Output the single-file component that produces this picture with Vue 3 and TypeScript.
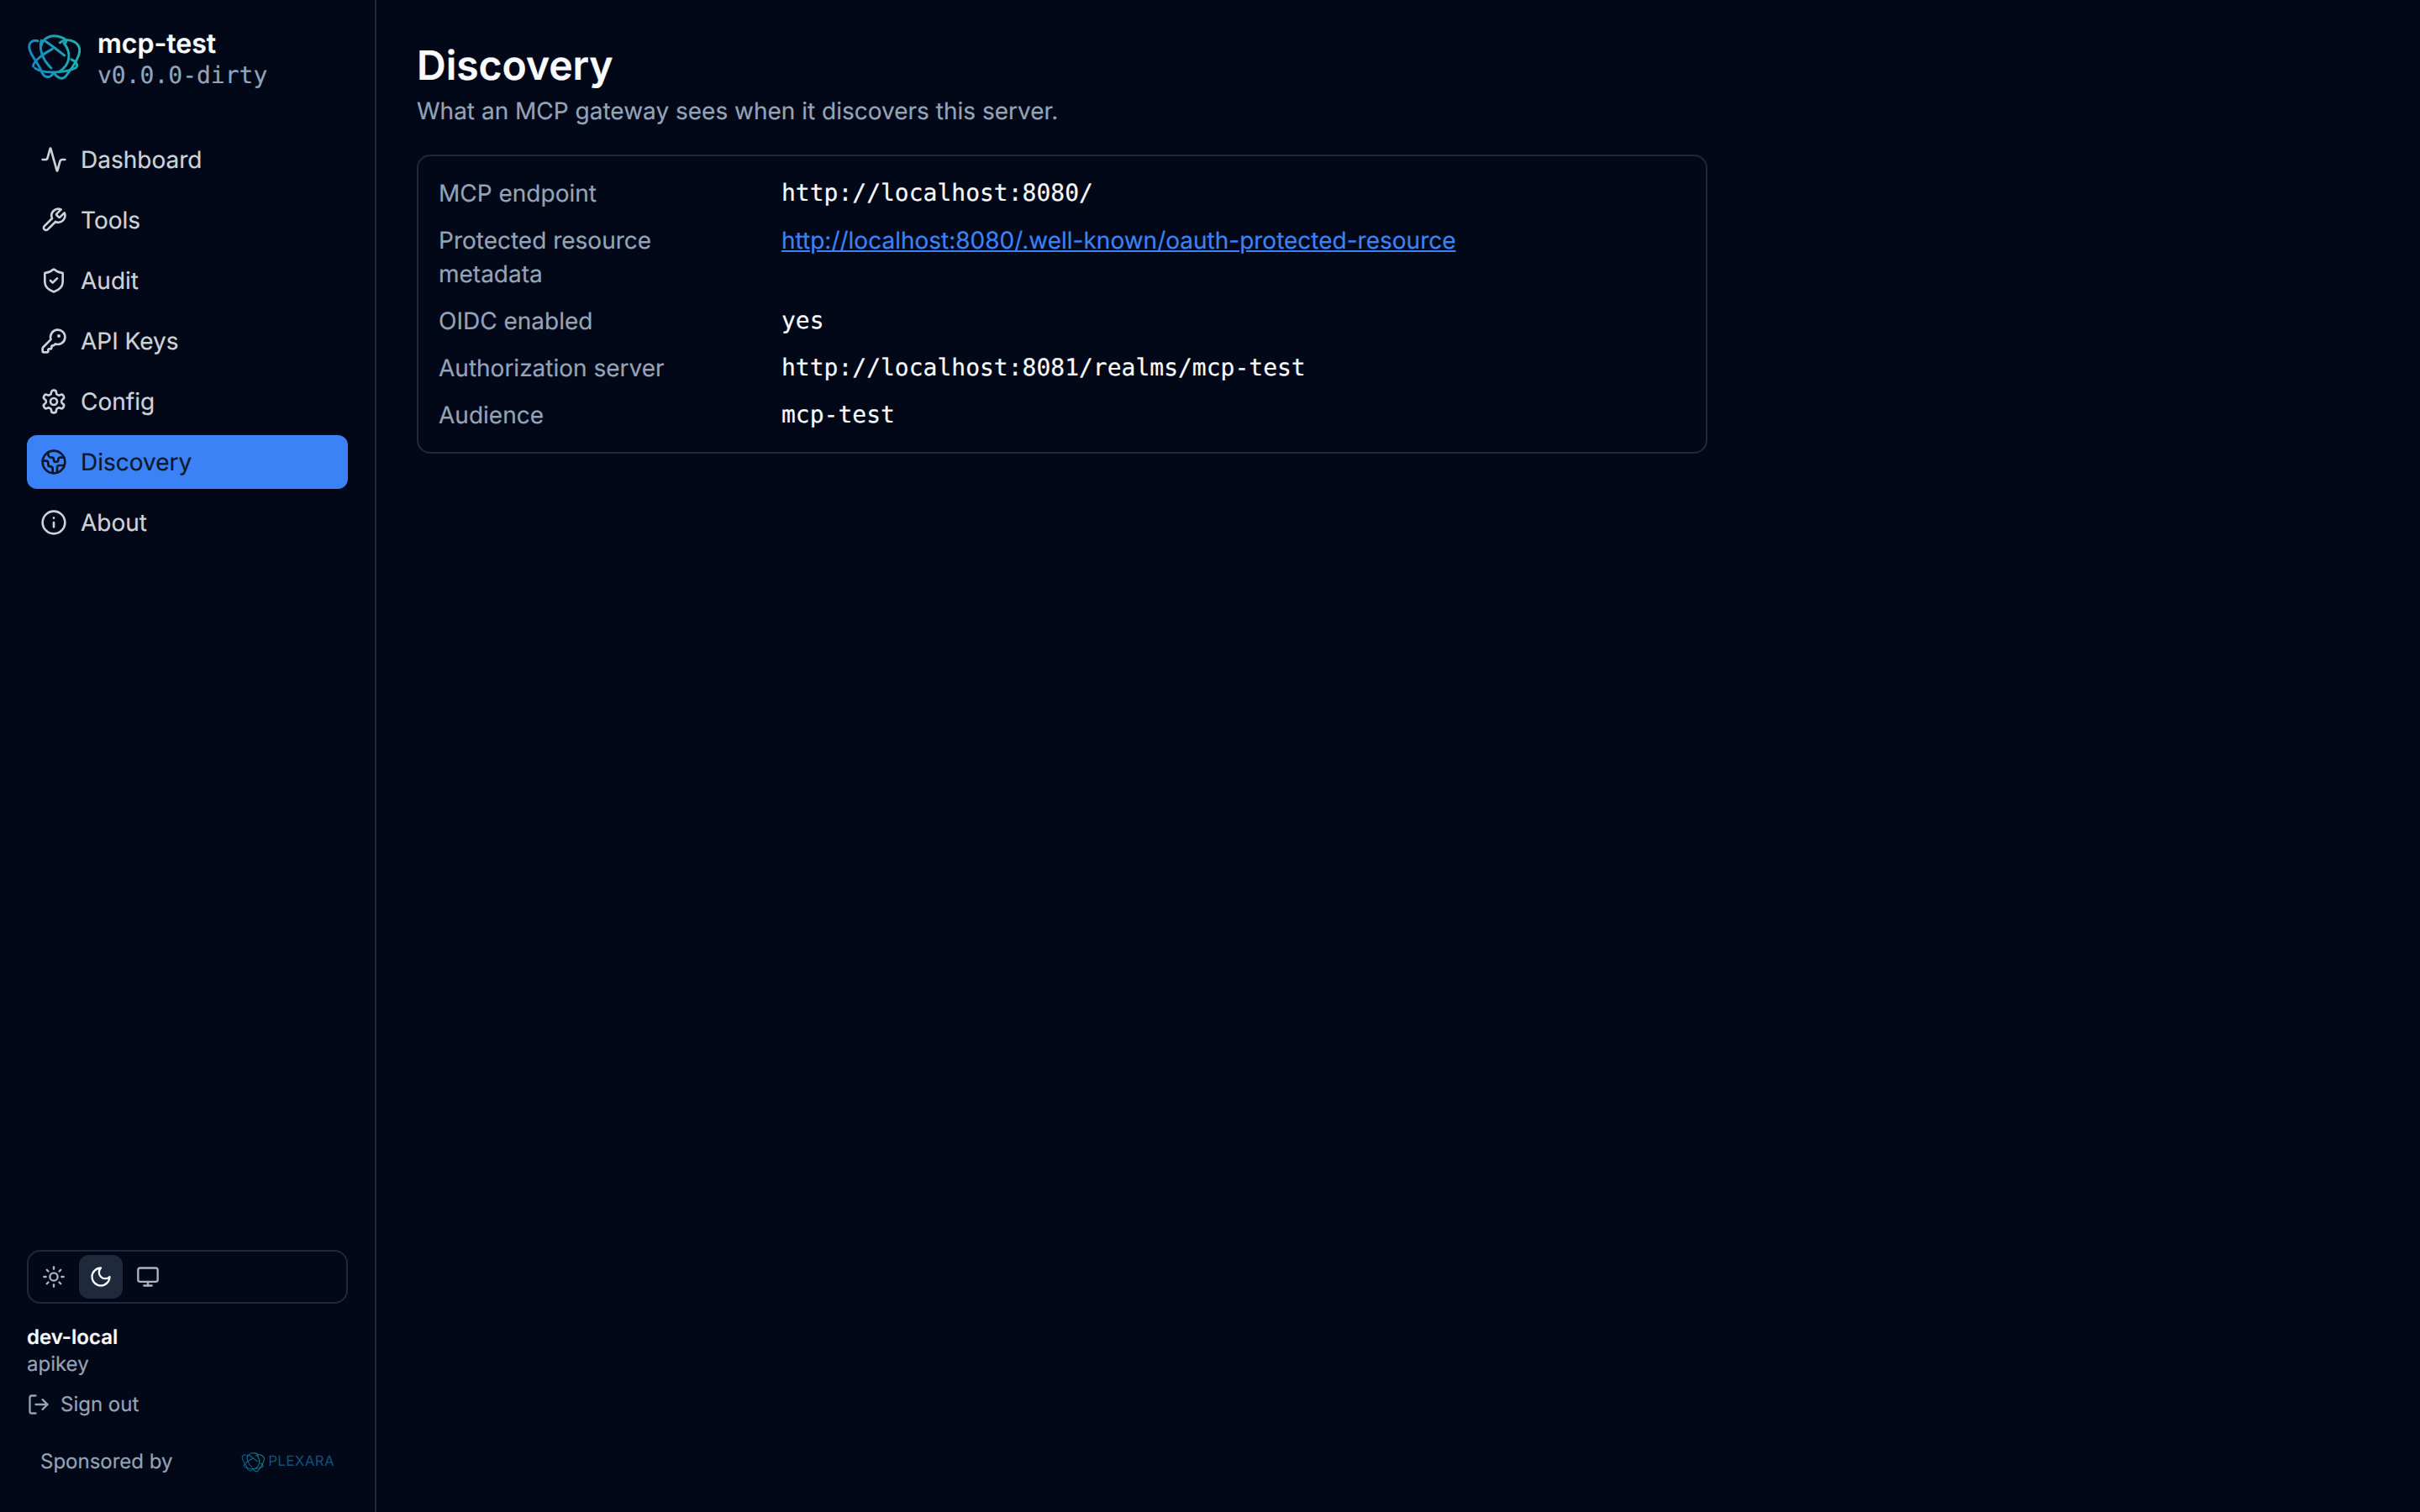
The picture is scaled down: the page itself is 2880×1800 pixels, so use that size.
<script setup lang="ts">
const c = (cx: number, cy: number, r: number) =>
  `M${cx - r} ${cy}a${r} ${r} 0 1 0 ${2 * r} 0a${r} ${r} 0 1 0 ${-2 * r} 0`

const icons: Record<string, string[]> = {
  activity: ['M22 12h-2.48a2 2 0 0 0-1.93 1.46l-2.35 8.36a.25.25 0 0 1-.48 0L9.24 2.18a.25.25 0 0 0-.48 0l-2.35 8.36A2 2 0 0 1 4.49 12H2'],
  wrench: ['M14.7 6.3a1 1 0 0 0 0 1.4l1.6 1.6a1 1 0 0 0 1.4 0l3.77-3.77a6 6 0 0 1-7.94 7.94l-6.91 6.91a2.12 2.12 0 0 1-3-3l6.91-6.91a6 6 0 0 1 7.94-7.94l-3.76 3.76z'],
  shield: ['M20 13c0 5-3.5 7.5-7.66 8.95a1 1 0 0 1-.67-.01C7.5 20.5 4 18 4 13V6a1 1 0 0 1 1-1c2 0 4.5-1.2 6.24-2.72a1.17 1.17 0 0 1 1.52 0C14.51 3.81 17 5 19 5a1 1 0 0 1 1 1z', 'm9 12 2 2 4-4'],
  key: ['M2.586 17.414A2 2 0 0 0 2 18.828V21a1 1 0 0 0 1 1h3a1 1 0 0 0 1-1v-1a1 1 0 0 1 1-1h1a1 1 0 0 0 1-1v-1a1 1 0 0 1 1-1h.172a2 2 0 0 0 1.414-.586l.814-.814a6.5 6.5 0 1 0-4-4z', c(16.5, 7.5, 0.5)],
  gear: ['M12.22 2h-.44a2 2 0 0 0-2 2v.18a2 2 0 0 1-1 1.73l-.43.25a2 2 0 0 1-2 0l-.15-.08a2 2 0 0 0-2.73.73l-.22.38a2 2 0 0 0 .73 2.73l.15.1a2 2 0 0 1 1 1.72v.51a2 2 0 0 1-1 1.74l-.15.09a2 2 0 0 0-.73 2.73l.22.38a2 2 0 0 0 2.73.73l.15-.08a2 2 0 0 1 2 0l.43.25a2 2 0 0 1 1 1.73V20a2 2 0 0 0 2 2h.44a2 2 0 0 0 2-2v-.18a2 2 0 0 1 1-1.73l.43-.25a2 2 0 0 1 2 0l.15.08a2 2 0 0 0 2.73-.73l.22-.39a2 2 0 0 0-.73-2.73l-.15-.08a2 2 0 0 1-1-1.74v-.5a2 2 0 0 1 1-1.74l.15-.09a2 2 0 0 0 .73-2.73l-.22-.38a2 2 0 0 0-2.73-.73l-.15.08a2 2 0 0 1-2 0l-.43-.25a2 2 0 0 1-1-1.73V4a2 2 0 0 0-2-2z', c(12, 12, 3)],
  earth: ['M21.54 15H17a2 2 0 0 0-2 2v4.54', 'M7 3.34V5a3 3 0 0 0 3 3a2 2 0 0 1 2 2c0 1.1.9 2 2 2a2 2 0 0 0 2-2c0-1.1.9-2 2-2h3.17', 'M11 21.95V18a2 2 0 0 0-2-2a2 2 0 0 1-2-2v-1a2 2 0 0 0-2-2H2.05', c(12, 12, 10)],
  info: [c(12, 12, 10), 'M12 16v-4', 'M12 8h.01'],
  sun: [c(12, 12, 4), 'M12 2v2', 'M12 20v2', 'm4.93 4.93 1.41 1.41', 'm17.66 17.66 1.41 1.41', 'M2 12h2', 'M20 12h2', 'm6.34 17.66-1.41 1.41', 'm19.07 4.93-1.41 1.41'],
  moon: ['M12 3a6 6 0 0 0 9 9 9 9 0 1 1-9-9Z'],
  monitor: ['M4 3h16a2 2 0 0 1 2 2v10a2 2 0 0 1-2 2H4a2 2 0 0 1-2-2V5a2 2 0 0 1 2-2z', 'M8 21h8', 'M12 17v4'],
  logout: ['m16 17 5-5-5-5', 'M21 12H9', 'M9 21H5a2 2 0 0 1-2-2V5a2 2 0 0 1 2-2h4'],
}

const nav = [
  { label: 'Dashboard', icon: 'activity' },
  { label: 'Tools', icon: 'wrench' },
  { label: 'Audit', icon: 'shield' },
  { label: 'API Keys', icon: 'key' },
  { label: 'Config', icon: 'gear' },
  { label: 'Discovery', icon: 'earth', active: true },
  { label: 'About', icon: 'info' },
]

const themes = [
  { icon: 'sun' },
  { icon: 'moon', active: true },
  { icon: 'monitor' },
]

const logoPaths = [
  'M76 86C56 80 42 94 47 114C52 138 76 160 88 190C96 214 118 218 130 196',
  'M88 102C92 78 118 64 145 70C165 74 178 82 172 92',
  'M152 92C175 74 212 84 220 112C224 140 196 176 174 206C160 224 140 212 132 196',
  'M88 84C80 112 90 150 122 180',
  'M60 174C58 160 88 134 126 114',
  'M66 180C96 202 176 196 208 178C218 168 204 154 192 150',
  'M100 86C126 102 148 122 168 136',
  'M166 94C192 124 190 168 150 192',
]
</script>

<template>
  <div class="shell">
    <aside class="sidebar">
      <div class="brand">
        <svg class="logo" viewBox="38 58 186 165" fill="none">
          <defs>
            <linearGradient id="knot" gradientUnits="userSpaceOnUse" x1="40" y1="150" x2="225" y2="110">
              <stop offset="0" stop-color="#1585c4" />
              <stop offset="1" stop-color="#1fb5ad" />
            </linearGradient>
          </defs>
          <path v-for="d in logoPaths" :key="d" :d="d" stroke="url(#knot)" stroke-width="8.5" stroke-linecap="round" />
        </svg>
        <div class="brand-text">
          <div class="brand-name">mcp-test</div>
          <div class="brand-version">v0.0.0-dirty</div>
        </div>
      </div>

      <nav class="nav">
        <a v-for="item in nav" :key="item.label" class="nav-item" :class="{ active: item.active }">
          <svg class="icon" viewBox="0 0 24 24">
            <path v-for="d in icons[item.icon]" :key="d" :d="d" />
          </svg>
          <span>{{ item.label }}</span>
        </a>
      </nav>

      <div class="foot">
        <div class="theme">
          <button v-for="t in themes" :key="t.icon" class="theme-btn" :class="{ active: t.active }">
            <svg class="icon-sm" viewBox="0 0 24 24">
              <path v-for="d in icons[t.icon]" :key="d" :d="d" />
            </svg>
          </button>
        </div>
        <div class="user">
          <div class="user-name">dev-local</div>
          <div class="user-kind">apikey</div>
        </div>
        <a class="signout">
          <svg class="icon-sm" viewBox="0 0 24 24">
            <path v-for="d in icons.logout" :key="d" :d="d" />
          </svg>
          <span>Sign out</span>
        </a>
        <div class="sponsor">
          <span>Sponsored by</span>
          <span class="plexara">
            <svg class="plexara-logo" viewBox="38 58 186 165" fill="none">
              <path v-for="d in logoPaths" :key="d" :d="d" stroke="url(#knot)" stroke-width="7" stroke-linecap="round" />
            </svg>
            <span>PLEXARA</span>
          </span>
        </div>
      </div>
    </aside>

    <main class="main">
      <h1 class="title">Discovery</h1>
      <p class="subtitle">What an MCP gateway sees when it discovers this server.</p>
      <dl class="card">
        <dt>MCP endpoint</dt>
        <dd class="mono">http://localhost:8080/</dd>
        <dt>Protected resource metadata</dt>
        <dd><a class="link">http://localhost:8080/.well-known/oauth-protected-resource</a></dd>
        <dt>OIDC enabled</dt>
        <dd class="mono">yes</dd>
        <dt>Authorization server</dt>
        <dd class="mono">http://localhost:8081/realms/mcp-test</dd>
        <dt>Audience</dt>
        <dd class="mono">mcp-test</dd>
      </dl>
    </main>
  </div>
</template>

<style scoped>
.shell {
  display: flex;
  height: 1800px;
  font-family: Inter, "Noto Sans", sans-serif;
  font-size: 28px;
  line-height: 40px;
  color: #f8fafc;
  background: #020817;
  text-rendering: geometricPrecision;
  -webkit-text-stroke: 0.2px currentColor;
}
.sidebar {
  width: 448px;
  box-sizing: border-box;
  border-right: 2px solid #1e293b;
  padding: 32px 32px 40px;
  display: flex;
  flex-direction: column;
}
.brand {
  display: flex;
  align-items: flex-start;
  gap: 20px;
  height: 70px;
}
.logo {
  width: 64px;
  height: 57px;
  margin-top: 7px;
  flex: none;
}
.brand-name {
  font-size: 32px;
  font-weight: 600;
  line-height: 40px;
}
.brand-version {
  font-family: "DejaVu Sans Mono", monospace;
  font-size: 28px;
  line-height: 36px;
  color: #94a3b8;
}
.nav {
  margin-top: 56px;
  display: flex;
  flex-direction: column;
  gap: 8px;
}
.nav-item {
  display: flex;
  align-items: center;
  gap: 16px;
  height: 64px;
  padding: 0 16px;
  border-radius: 12px;
  color: #cdd2d9;
}
.nav-item.active {
  background: #3b82f6;
  color: #0f172a;
}
.icon,
.icon-sm {
  flex: none;
  fill: none;
  stroke: currentColor;
  stroke-width: 2;
  stroke-linecap: round;
  stroke-linejoin: round;
}
.icon {
  width: 32px;
  height: 32px;
}
.icon-sm {
  width: 28px;
  height: 28px;
}
.foot {
  margin-top: auto;
  display: flex;
  flex-direction: column;
}
.theme {
  display: flex;
  gap: 4px;
  padding: 4px;
  border: 2px solid #1e293b;
  border-radius: 16px;
}
.theme-btn {
  width: 52px;
  height: 52px;
  display: flex;
  align-items: center;
  justify-content: center;
  padding: 0;
  border: 0;
  border-radius: 12px;
  background: transparent;
  color: #aab4c2;
}
.theme-btn.active {
  background: #1e293b;
  color: #f8fafc;
}
.user {
  margin-top: 24px;
}
.user-name {
  font-size: 24px;
  line-height: 32px;
  font-weight: 600;
}
.user-kind {
  font-size: 24px;
  line-height: 32px;
  color: #94a3b8;
}
.signout {
  margin-top: 12px;
  display: flex;
  align-items: center;
  gap: 12px;
  font-size: 24px;
  line-height: 40px;
  color: #94a3b8;
}
.sponsor {
  margin-top: 28px;
  padding: 0 16px;
  display: flex;
  align-items: center;
  justify-content: space-between;
  font-size: 24px;
  line-height: 40px;
  color: #94a3b8;
}
.plexara {
  display: flex;
  align-items: center;
  gap: 4px;
  font-size: 17px;
  letter-spacing: 0.3px;
  color: #11527d;
  -webkit-text-stroke: 0;
}
.plexara-logo {
  width: 28px;
  height: 25px;
  opacity: 0.7;
}
.main {
  flex: 1;
  padding: 48px;
}
.title {
  margin: 0;
  font-size: 48px;
  line-height: 60px;
  font-weight: 600;
}
.subtitle {
  margin: 4px 0 0;
  color: #94a3b8;
}
.card {
  box-sizing: border-box;
  width: 1536px;
  margin: 32px 0 0;
  padding: 24px;
  border: 2px solid #1e293b;
  border-radius: 16px;
  display: grid;
  grid-template-columns: 360px 1fr;
  column-gap: 48px;
  row-gap: 16px;
}
dt {
  color: #94a3b8;
}
dd {
  margin: 0;
}
.mono {
  font-family: "DejaVu Sans Mono", monospace;
}
.link {
  color: #3b82f6;
  text-decoration: underline;
}
</style>

<style>
body {
  background: #020817;
}
</style>
